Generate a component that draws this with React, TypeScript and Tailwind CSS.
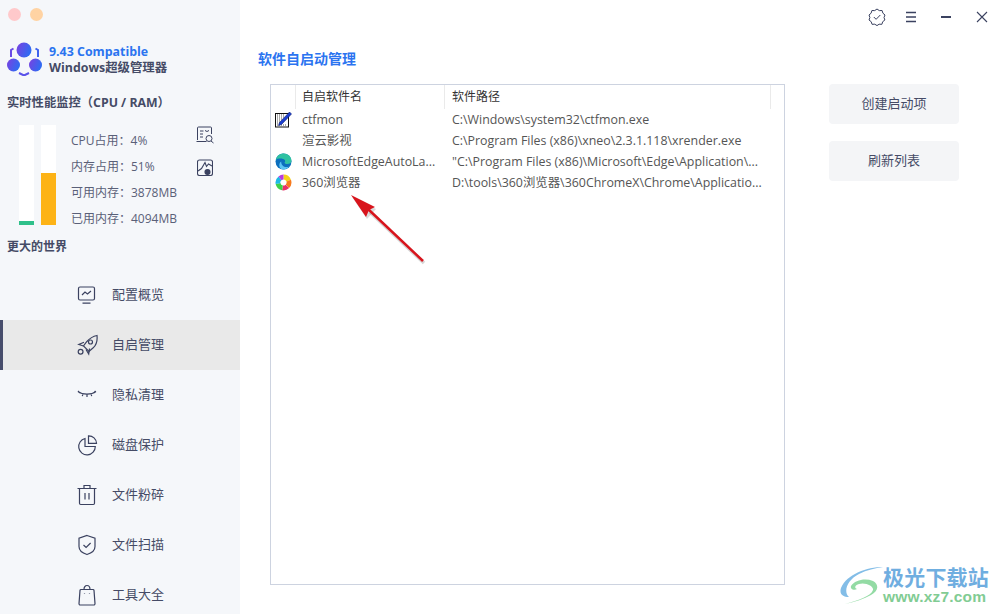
import type { ReactNode } from 'react';

const FONT = "font-['Open_Sans','Noto_Sans_CJK_SC',sans-serif]";

const navItems: { label: string; icon: ReactNode; active?: boolean }[] = [
  {
    label: '配置概览',
    icon: (
      <>
        <rect x="2.500" y="3" width="16" height="13" rx="1.500" />
        <path d="M6 11l3-3 2.500 2 3.500-3M6.500 19.200h8" />
      </>
    ),
  },
  {
    label: '自启管理',
    active: true,
    icon: (
      <>
        <path d="M21 1.500c.6 5.500-.8 9.500-3.800 12.300L13 17.500l-5.500-5.500 3.400-4.500C13.700 4.300 17 2.300 21 1.500z" />
        <circle cx="14.500" cy="8" r="2" />
        <path d="M8 8.200L2.800 10.500l4.700 1.500M13.500 14.500l-.8 5.500-2.700-4.500" />
        <circle cx="4.600" cy="17.700" r="2.400" />
      </>
    ),
  },
  {
    label: '隐私清理',
    icon: <path d="M2 7.500c4.500 3.500 13.500 3.500 18 0M2 7l1.600 1.800M19.500 7l-1.600 1.800M7 9.800l-.7 2.400M15 9.800l.7 2.400M11 10.500v2.500" />,
  },
  {
    label: '磁盘保护',
    icon: (
      <>
        <path d="M9 4.500A8.300 8.300 0 1 0 19.300 12.500H9V4.500z" />
        <path d="M12.500 1.800v7.500h8A7.800 7.800 0 0 0 12.500 1.800z" />
      </>
    ),
  },
  {
    label: '文件粉碎',
    icon: <path d="M1.500 4.500h19M8 4.500V1.500h6v3M3.500 4.500v14.800a1.200 1.200 0 0 0 1.200 1.200h12.600a1.200 1.200 0 0 0 1.200-1.200V4.500M9 9v6.500M13 9v6.500" />,
  },
  {
    label: '文件扫描',
    icon: <path d="M11 1.500l8 2.800v8.200c0 4-4 6.800-8 8-4-1.200-8-4-8-8V4.300l8-2.800zM7.500 11l2.600 2.500 4.500-4.500" />,
  },
  {
    label: '工具大全',
    icon: (
      <>
        <path d="M5 5.500h12a1 1 0 0 1 1 .9l1 13.200a1.300 1.300 0 0 1-1.300 1.400H4.300A1.300 1.300 0 0 1 3 19.600L4 6.400a1 1 0 0 1 1-.9z" />
        <path d="M8 5.500C8 3 9.300 1.500 11 1.500S14 3 14 5.500M8.500 9.500v.6M13.500 9.500v.6" />
      </>
    ),
  },
];

const rows: { name: string; path: string; icon?: ReactNode }[] = [
  { name: 'ctfmon', path: 'C:\\Windows\\system32\\ctfmon.exe', icon: <NotepadIcon /> },
  { name: '渲云影视', path: 'C:\\Program Files (x86)\\xneo\\2.3.1.118\\xrender.exe' },
  { name: 'MicrosoftEdgeAutoLa...', path: '"C:\\Program Files (x86)\\Microsoft\\Edge\\Application\\...', icon: <EdgeIcon /> },
  { name: '360浏览器', path: 'D:\\tools\\360浏览器\\360ChromeX\\Chrome\\Applicatio...', icon: <Browser360Icon /> },
];

const stats = ['CPU占用：4%', '内存占用：51%', '可用内存：3878MB', '已用内存：4094MB'];

function NotepadIcon() {
  return (
    <svg width="17" height="17" viewBox="0 0 17 17">
      <rect x="0.500" y="2.500" width="13" height="13.500" fill="#fff" stroke="#111" />
      <path d="M2 4h8M2 6h7M2 8h6M2 10h4M2 12h3M2 14h9" stroke="#555" strokeDasharray="1 1" />
      <path d="M4.500 11.500L14.500 1l2 2L6.500 13.500 3.500 14.500z" fill="#1c3fd0" stroke="#0a1a70" strokeWidth="0.600" />
    </svg>
  );
}

function EdgeIcon() {
  return (
    <svg width="17" height="17" viewBox="0 0 17 17">
      <circle cx="8.500" cy="8.500" r="8" fill="#0c6fbe" />
      <path d="M.7 7C1.800 2.500 5.300.5 8.500.5c4.500 0 8 3.200 8 7.200 0 2.300-2 3.300-4 3.300-1.500 0-2.800-.5-3-1.500 1-.8 1.200-2.800-1.500-3.500C5.500 5.300 2.500 5.500.7 7z" fill="#2fc2a2" />
      <path d="M6.200 8.500c-.2 3.200 2.300 5.600 5.300 5.600 1 0 1.700-.2 2.400-.6C12 16 9.500 16.900 7.500 16.500 3.500 15.500 3.500 10 6.200 8.500z" fill="#5cc4f2" />
    </svg>
  );
}

function Browser360Icon() {
  return (
    <svg width="17" height="17" viewBox="0 0 17 17" fill="none" strokeWidth="4.800">
      <path d="M8.500 3a5.500 5.500 0 0 1 5.200 3.600" stroke="#f5d21a" />
      <path d="M13.700 6.600a5.500 5.500 0 0 1-1.300 5.700" stroke="#f77a1e" />
      <path d="M12.400 12.300a5.500 5.500 0 0 1-4.900 1.600" stroke="#e9306b" />
      <path d="M7.500 13.900a5.500 5.500 0 0 1-4.500-4.300" stroke="#3fd04a" />
      <path d="M3 9.600A5.500 5.500 0 0 1 5 4.300" stroke="#1fb9e6" />
      <path d="M5 4.300A5.500 5.500 0 0 1 8.500 3" stroke="#b83be0" />
    </svg>
  );
}

function Logo() {
  return (
    <svg width="36" height="34" viewBox="0 0 36 34" className="shrink-0">
      <defs>
        <linearGradient id="lg" x1="0" y1="0" x2="1" y2="0.400">
          <stop offset="0" stopColor="#7c3fe0" />
          <stop offset="1" stopColor="#2f6bf2" />
        </linearGradient>
      </defs>
      <circle cx="17" cy="8" r="7.500" fill="url(#lg)" />
      <circle cx="6.500" cy="23" r="6.500" fill="url(#lg)" />
      <circle cx="28.500" cy="23" r="6.500" fill="url(#lg)" />
      <path d="M4 15V8l2.500-1.500" fill="none" stroke="#6a4be6" strokeWidth="2" />
      <path d="M31 15V8l-2.500-1.500" fill="none" stroke="#3f63ee" strokeWidth="2" />
      <path d="M12 31l5 2.500 5-2.500" fill="none" stroke="#5a52ea" strokeWidth="2" />
    </svg>
  );
}

function WindowIcons() {
  return (
    <div className="flex h-[34px] items-center justify-end pr-[11px] text-[#3b4260]">
      <svg width="20" height="20" viewBox="0 0 20 20" fill="none" stroke="currentColor" strokeWidth="1">
        <path d="M10 2l2.300 1.600 2.800-.1.800 2.700L18 8l-1 2.500.9 2.500-2.200 1.700-.8 2.600-2.800-.1L10 18.600l-2.200-1.400-2.800.1-.8-2.600L2 13l.9-2.500L2 8l2.100-1.800.8-2.700 2.800.1L10 2z" />
        <path d="M6.800 10l2.300 2.300 4.200-4.300" />
      </svg>
      <svg width="12" height="12" viewBox="0 0 12 12" className="ml-[18px] mr-[2px]" stroke="currentColor" strokeWidth="1.500">
        <path d="M1 1.500h10M1 6h10M1 10.500h10" />
      </svg>
      <div className="ml-[22px] h-[2px] w-[10px] bg-current" />
      <svg width="12" height="12" viewBox="0 0 12 12" className="ml-[25px]" stroke="currentColor" strokeWidth="1.100">
        <path d="M1 1l10 10M11 1L1 11" />
      </svg>
    </div>
  );
}

function Watermark() {
  return (
    <div className="absolute bottom-[8px] left-[839px] flex items-center opacity-75">
      <svg width="46" height="42" viewBox="0 0 46 42" fill="none">
        <path d="M44 3C28 3 8 10 2 24c-2 6 2 9 8 9C4 28 8 16 20 10c8-4 16-6 24-7z" fill="#5aa8e0" />
        <path d="M12 22c4-6 14-8 22-5 6 3 6 10-2 14-7 4-16 7-26 9 14-4 26-8 28-14 1-4-8-8-14-6-4 1-5 4-2 5-3 2-7 0-6-3z" fill="#6fcf86" />
      </svg>
      <div className="-ml-[2px] flex flex-col">
        <span className="text-[21px] leading-[24px] font-bold tracking-[0.2px] text-[#3f93d6]">极光下载站</span>
        <span className="font-['Liberation_Sans',sans-serif] text-[15.5px] leading-[16px] font-bold tracking-[0.2px] text-[#58bb70]">www.xz7.com</span>
      </div>
    </div>
  );
}

export default function App() {
  return (
    <div className={`relative flex h-[614px] w-[999px] overflow-hidden bg-white ${FONT}`}>
      <aside className="flex h-[640px] w-[240px] shrink-0 flex-col bg-[#f5f7fa] text-[#454b66]">
        <div className="flex gap-[9px] pt-[8px] pl-[8px]">
          <div className="h-[13px] w-[13px] rounded-full bg-[#ffc9cb]" />
          <div className="h-[13px] w-[13px] rounded-full bg-[#ffd3a3]" />
        </div>
        <div className="mt-[21px] flex items-center gap-[6px] pl-[7px]">
          <Logo />
          <div className="flex flex-col pt-[2px] text-[12.4px] leading-[16px] font-bold">
            <span className="text-[#2b74f0]">9.43 Compatible</span>
            <span>Windows超级管理器</span>
          </div>
        </div>
        <div className="mt-[18px] pl-[7px] text-[12.3px] leading-[18px] font-bold">实时性能监控（CPU / RAM）</div>
        <div className="mt-[13px] flex pl-[19px]">
          <div className="flex h-[100px] w-[15px] flex-col justify-end bg-white">
            <div className="h-[4px] bg-[#2fc08a]" />
          </div>
          <div className="ml-[7px] flex h-[100px] w-[15px] flex-col justify-end bg-white">
            <div className="h-[52px] bg-[#fdb316]" />
          </div>
          <div className="ml-[15px] flex w-[125px] flex-col pt-[3px] text-[12px] leading-[26px] text-[#5a6078]">
            {stats.map((s) => (
              <span key={s}>{s}</span>
            ))}
          </div>
          <div className="flex flex-col gap-[15px] pt-[1px] text-[#3b4260]">
            <svg width="18" height="18" viewBox="0 0 18 18" fill="none" stroke="currentColor" strokeWidth="1">
              <path d="M1.500 14V2a1 1 0 0 1 1-1h12a1 1 0 0 1 1 1v6M.5 15.500h10M4 5h3.500M4 8h3M4 11h3M9 4.500l2 1 2-1" />
              <circle cx="13" cy="12.500" r="3" />
              <path d="M15 15l2.500 2" />
            </svg>
            <svg width="16" height="18" viewBox="0 0 16 18" fill="none" stroke="currentColor" strokeWidth="1.100" className="ml-[1px]">
              <rect x="0.500" y="1" width="15" height="15.500" rx="2" />
              <path d="M1 12l3.500-2.500L8 3.500l1.500 4 2-2.500 3.500 2" />
              <circle cx="10.500" cy="13" r="2.500" fill="currentColor" />
            </svg>
          </div>
        </div>
        <div className="mt-[6px] pl-[7px] text-[12px] leading-[18px] font-bold">更大的世界</div>
        <nav className="mt-[14px] flex flex-col">
          {navItems.map((item) => (
            <div
              key={item.label}
              className={`flex h-[50px] shrink-0 items-center text-[13px] ${
                item.active ? 'border-l-[3px] border-[#474d6b] bg-[#e9e9e9] pl-[73px]' : 'pl-[76px]'
              }`}
            >
              <svg width="22" height="22" viewBox="0 0 22 22" fill="none" stroke="#3b4260" strokeWidth="1.200" className="shrink-0">
                {item.icon}
              </svg>
              <span className="ml-[14px]">{item.label}</span>
            </div>
          ))}
        </nav>
      </aside>

      <main className="flex min-w-0 flex-1 flex-col">
        <WindowIcons />
        <div className="flex flex-1">
          <div className="flex flex-col pl-[18px]">
            <h1 className="mt-[15px] h-[35px] text-[14px] leading-[20px] font-bold text-[#2b74f0]">软件自启动管理</h1>
            <div className="ml-[12px] h-[501px] w-[515px] border border-[#cdd3e0] text-[12px]">
              <div className="flex h-[24px] leading-[23px] text-[#333]">
                <div className="w-[25px] border-r border-[#eaeaea]" />
                <div className="w-[149px] border-r border-[#eaeaea] pl-[6px]">自启软件名</div>
                <div className="w-[326px] border-r border-[#eaeaea] pl-[7px]">软件路径</div>
              </div>
              <div className="text-[12.4px]">
                {rows.map((row) => (
                  <div key={row.name} className="flex h-[21px] items-center leading-[21px] text-[#555]">
                    <div className="flex w-[31px] shrink-0 items-center pl-[4px]">{row.icon}</div>
                    <div className="w-[150px] shrink-0 whitespace-nowrap">{row.name}</div>
                    <div className="whitespace-nowrap">{row.path}</div>
                  </div>
                ))}
              </div>
            </div>
          </div>
          <div className="ml-[44px] flex flex-col gap-[17px] pt-[50px] text-[13px] text-[#454b66]">
            <button className="h-[40px] w-[130px] rounded-[4px] bg-[#f4f5f7]">创建启动项</button>
            <button className="h-[40px] w-[130px] rounded-[4px] bg-[#f4f5f7]">刷新列表</button>
          </div>
        </div>
      </main>

      <svg width="90" height="80" viewBox="0 0 90 80" className="absolute top-[190px] left-[345px]">
        <path d="M78 71L24 20" stroke="#888" strokeWidth="3.500" opacity="0.35" transform="translate(1 2)" />
        <path d="M6 5l24 12-9 10z" fill="#888" opacity="0.3" transform="translate(1 2)" />
        <path d="M78 71L23 19" stroke="#d8141c" strokeWidth="2.500" />
        <path d="M6 5l24 12-6 3-3 7z" fill="#d8141c" />
      </svg>
      <Watermark />
    </div>
  );
}
